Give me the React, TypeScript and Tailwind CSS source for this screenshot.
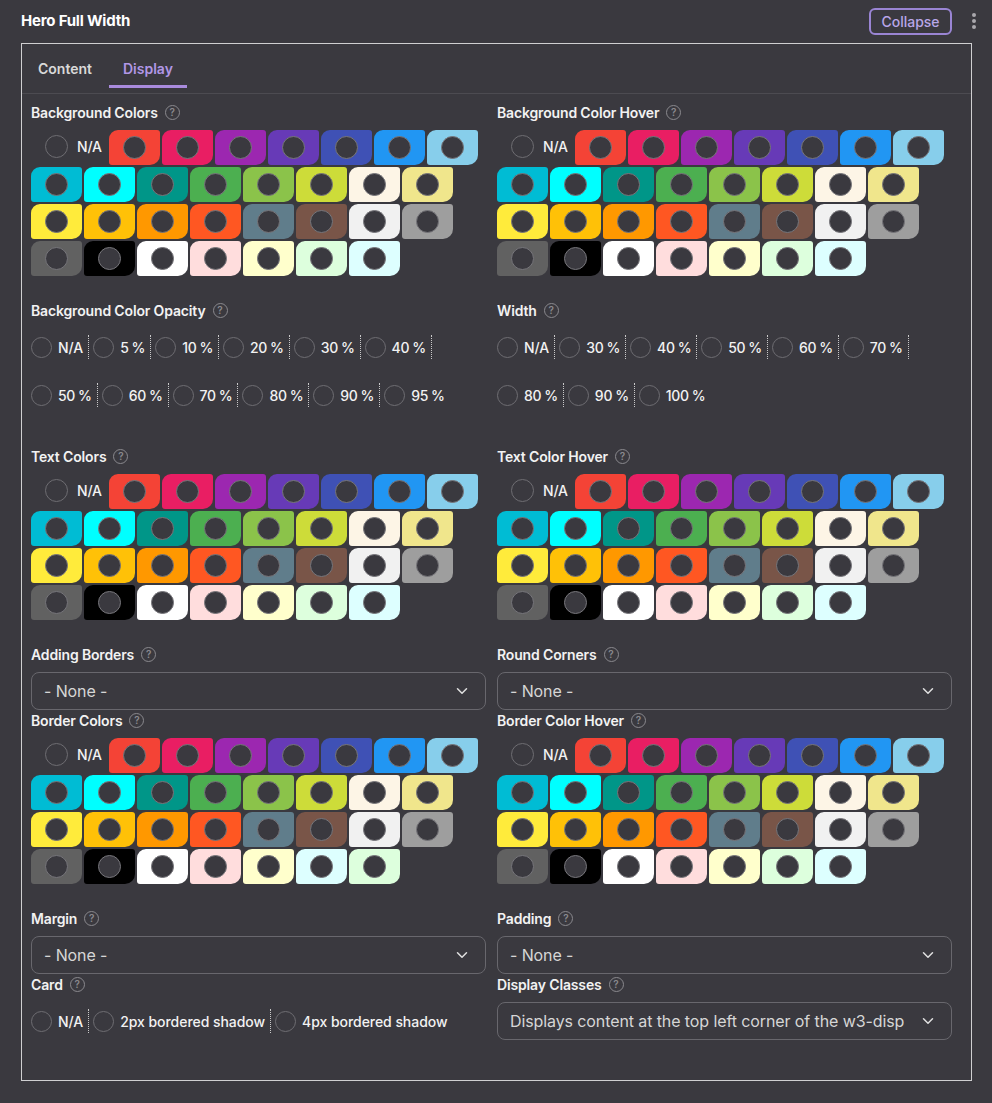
import React from "react";
import { ChevronDown } from "lucide-react";

const base = [
  "#f44336", "#e91e63", "#9c27b0", "#673ab7", "#3f51b5", "#2196f3", "#87ceeb",
  "#00bcd4", "#00ffff", "#009688", "#4caf50", "#8bc34a", "#cddc39", "#fdf5e6", "#f0e68c",
  "#ffeb3b", "#ffc107", "#ff9800", "#ff5722", "#607d8b", "#795548", "#f1f1f1", "#9e9e9e",
  "#616161", "#000000", "#ffffff", "#ffdddd", "#ffffcc", "#ddffdd", "#ddffff",
];
const swapped = [...base.slice(0, 28), "#ddffff", "#ddffdd"];

function Help() {
  return (
    <span className="ml-[7px] inline-flex h-[15px] w-[15px] items-center justify-center rounded-full border border-[#8a898e] text-[10px] font-semibold leading-none tracking-normal text-[#8a898e]">
      ?
    </span>
  );
}

function Label({ text }: { text: string }) {
  return (
    <div className="flex h-[20px] items-center text-[14px] font-semibold tracking-[-0.15px] text-[#f2f2f2]">
      {text}
      <Help />
    </div>
  );
}

function Swatches({ label, colors }: { label: string; colors: string[] }) {
  return (
    <div className="mb-[24px]">
      <Label text={label} />
      <div className="mt-2 flex flex-wrap gap-[2px]">
        <div className="flex h-[35px] w-[76px] items-center pb-[3px] pl-[14px]">
          <span className="h-[23px] w-[23px] rounded-full border border-[#6e6d72]" />
          <span className="ml-[9px] text-[14px] font-medium tracking-[-0.2px] text-[#f2f2f2]">N/A</span>
        </div>
        {colors.map((c, i) => (
          <div
            key={i}
            className="flex h-[35px] w-[51px] items-center justify-center rounded-tl-[9px] rounded-tr-[3px] rounded-bl-[3px] rounded-br-[10px]"
            style={{ backgroundColor: c }}
          >
            <span className="h-[23px] w-[23px] rounded-full border border-[#77767b] bg-[#3a393f]" />
          </div>
        ))}
      </div>
    </div>
  );
}

function RadioText({ t }: { t: string }) {
  if (t.endsWith(" %")) {
    return (
      <span className="whitespace-nowrap text-[14px] font-medium tracking-[-0.3px] text-[#f2f2f2]">
        {t.slice(0, -2)}
        <span className="ml-[3px]">%</span>
      </span>
    );
  }
  return <span className="whitespace-nowrap text-[14px] font-medium tracking-[-0.05px] text-[#f2f2f2]">{t}</span>;
}

function Radios({ label, items, mb = "mb-[27px]" }: { label: string; items: string[]; mb?: string }) {
  return (
    <div className={mb}>
      <Label text={label} />
      <div className="-ml-[4px] mt-[3px] flex flex-wrap">
        {items.map((t, i) => (
          <div key={i} className="flex h-[48px] items-center">
            <div
              className={
                "flex h-[24px] items-center gap-[6px] pl-[4px] pr-[5px] " +
                (i === items.length - 1 ? "" : "border-r border-dotted border-[#c9c9c9]")
              }
            >
              <span className="h-[21px] w-[21px] rounded-full border border-[#6e6d72]" />
              <RadioText t={t} />
            </div>
          </div>
        ))}
      </div>
    </div>
  );
}

function Select({ label, value, mb = "" }: { label: string; value: string; mb?: string }) {
  return (
    <div className={mb}>
      <Label text={label} />
      <div className="mt-2 flex h-[38px] items-center rounded-[8px] border border-[#68676d] pl-[12px] pr-[14px]">
        <span className="min-w-0 flex-1 whitespace-nowrap text-[16px] tracking-[-0.1px] text-[#d6d6d6]">{value}</span>
        <ChevronDown className="ml-2 h-[18px] w-[18px] shrink-0 text-[#e0e0e0]" strokeWidth={2} />
      </div>
    </div>
  );
}

export default function App() {
  return (
    <div
      className="min-h-[1103px] w-full bg-[#3a393f] pb-[22px]"
      style={{ fontFamily: "Inter, 'Noto Sans', sans-serif" }}
    >
      <div className="flex h-[43px] items-center pl-[21px] pr-[15px]">
        <div className="flex-1 text-[15px] font-bold tracking-[-0.2px] text-white">Hero Full Width</div>
        <button className="flex h-[27px] w-[83px] items-center justify-center rounded-[6px] border-2 border-[#9a85d4] text-[14px] font-medium text-[#b8a6e8]">
          Collapse
        </button>
        <div className="mb-[2px] ml-[19px] flex w-[6px] flex-col items-center gap-[2px]">
          <span className="h-[4px] w-[4px] rounded-full bg-[#a9a8ad]" />
          <span className="h-[4px] w-[4px] rounded-full bg-[#a9a8ad]" />
          <span className="h-[4px] w-[4px] rounded-full bg-[#a9a8ad]" />
        </div>
      </div>
      <div className="ml-[21px] mr-[20px] h-[1038px] border border-[#cfcfd1]">
        <div className="mb-[5px] flex gap-[3px] px-[2px]">
          <div className="border-b-[3px] border-transparent px-[14px] pb-[6px] pt-[15px] text-[14px] font-semibold leading-[20px] text-[#d9d9d9]">
            Content
          </div>
          <div className="border-b-[3px] border-[#a98bdd] px-[14px] pb-[6px] pt-[15px] text-[14px] font-semibold leading-[20px] text-[#b197e6]">
            Display
          </div>
        </div>
        <div className="border-t border-[#4c4b51]" />
        <div className="grid grid-cols-[455px_455px] gap-x-[11px] pl-[9px] pt-[8px]">
          <div>
            <Swatches label="Background Colors" colors={base} />
            <Radios label="Background Color Opacity" items={["N/A", "5 %", "10 %", "20 %", "30 %", "40 %", "50 %", "60 %", "70 %", "80 %", "90 %", "95 %"]} />
            <Swatches label="Text Colors" colors={base} />
            <Select label="Adding Borders" value="- None -" />
            <Swatches label="Border Colors" colors={swapped} />
            <Select label="Margin" value="- None -" />
            <Radios label="Card" items={["N/A", "2px bordered shadow", "4px bordered shadow"]} mb="" />
          </div>
          <div>
            <Swatches label="Background Color Hover" colors={base} />
            <Radios label="Width" items={["N/A", "30 %", "40 %", "50 %", "60 %", "70 %", "80 %", "90 %", "100 %"]} />
            <Swatches label="Text Color Hover" colors={base} />
            <Select label="Round Corners" value="- None -" />
            <Swatches label="Border Color Hover" colors={base} />
            <Select label="Padding" value="- None -" />
            <Select label="Display Classes" value="Displays content at the top left corner of the w3-disp" />
          </div>
        </div>
      </div>
    </div>
  );
}
